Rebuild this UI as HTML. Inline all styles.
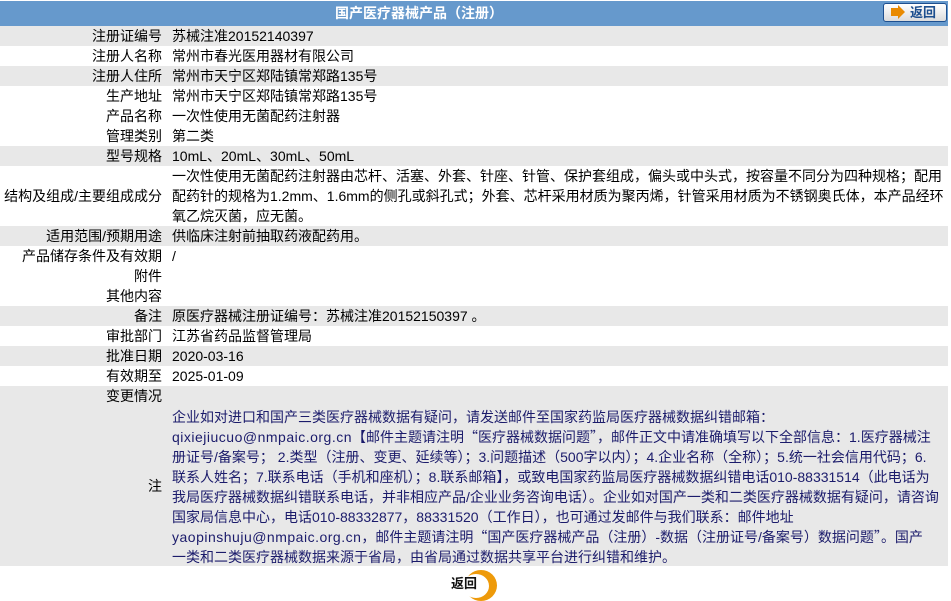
<!DOCTYPE html>
<html><head><meta charset="utf-8"><style>
*{margin:0;padding:0;box-sizing:border-box}
body{width:951px;height:601px;background:#fff;font-family:"Liberation Sans","Noto Sans CJK SC",sans-serif;font-size:14px;color:#000;position:relative;overflow:hidden}
.hd{position:absolute;left:0;top:1px;width:948px;height:25px;background:#6699cc;color:#fff;font-weight:bold;text-align:center;line-height:25px;font-size:14px}
.hd span{position:absolute;left:335px;top:0}
.btn{position:absolute;left:883px;top:3px;width:64px;height:19px;border:1px solid #1d4f8f;border-radius:3px;background:linear-gradient(#fff,#dcdcdc);}
.btn i{position:absolute;left:7px;top:4px;width:7px;height:8px;background:#e98a00}
.btn b{position:absolute;left:14px;top:1px;border-left:7px solid #e98a00;border-top:7px solid transparent;border-bottom:7px solid transparent}
.btn em{position:absolute;left:26px;top:-1px;font-style:normal;font-weight:bold;color:#1d4f8f;font-size:13px;line-height:19px}
.r{position:absolute;left:0;width:948px;line-height:20px;white-space:nowrap}
.g{background:#e8e8e8}
.l{position:absolute;right:786px;text-align:right}
.v{position:absolute;left:172px}
.n{color:#1b1b6b}
.q{font-family:"Noto Sans CJK SC",sans-serif}
.e{letter-spacing:0.5px}
</style></head><body>
<div class="hd"><span>国产医疗器械产品（注册）</span></div>
<div class="btn"><i></i><b></b><em>返回</em></div>

<div class="r g" style="top:26px;height:20px"><div class="l">注册证编号</div><div class="v">苏械注准20152140397</div></div>
<div class="r" style="top:46px;height:20px"><div class="l">注册人名称</div><div class="v">常州市春光医用器材有限公司</div></div>
<div class="r g" style="top:66px;height:20px"><div class="l">注册人住所</div><div class="v">常州市天宁区郑陆镇常郑路135号</div></div>
<div class="r" style="top:86px;height:20px"><div class="l">生产地址</div><div class="v">常州市天宁区郑陆镇常郑路135号</div></div>
<div class="r" style="top:106px;height:20px"><div class="l">产品名称</div><div class="v">一次性使用无菌配药注射器</div></div>
<div class="r" style="top:126px;height:20px"><div class="l">管理类别</div><div class="v">第二类</div></div>
<div class="r g" style="top:146px;height:20px"><div class="l">型号规格</div><div class="v">10mL、20mL、30mL、50mL</div></div>
<div class="r" style="top:166px;height:60px"><div class="l" style="top:20px">结构及组成/主要组成成分</div><div class="v">一次性使用无菌配药注射器由芯杆、活塞、外套、针座、针管、保护套组成，偏头或中头式，按容量不同分为四种规格；配用<br>配药针的规格为1.2mm、1.6mm的侧孔或斜孔式；外套、芯杆采用材质为聚丙烯，针管采用材质为不锈钢奥氏体，本产品经环<br>氧乙烷灭菌，应无菌。</div></div>
<div class="r g" style="top:226px;height:20px"><div class="l">适用范围/预期用途</div><div class="v">供临床注射前抽取药液配药用。</div></div>
<div class="r" style="top:246px;height:20px"><div class="l">产品储存条件及有效期</div><div class="v">/</div></div>
<div class="r" style="top:266px;height:20px"><div class="l">附件</div></div>
<div class="r" style="top:286px;height:20px"><div class="l">其他内容</div></div>
<div class="r g" style="top:306px;height:20px"><div class="l">备注</div><div class="v">原医疗器械注册证编号：苏械注准20152150397 。</div></div>
<div class="r" style="top:326px;height:20px"><div class="l">审批部门</div><div class="v">江苏省药品监督管理局</div></div>
<div class="r g" style="top:346px;height:20px"><div class="l">批准日期</div><div class="v">2020-03-16</div></div>
<div class="r" style="top:366px;height:20px"><div class="l">有效期至</div><div class="v">2025-01-09</div></div>
<div class="r g" style="top:386px;height:180px"><div class="l" style="top:0">变更情况</div><div class="l" style="top:90px">注</div>
<div class="v n" style="top:21px">企业如对进口和国产三类医疗器械数据有疑问，请发送邮件至国家药监局医疗器械数据纠错邮箱：<br><span class="e">qixiejiucuo@nmpaic.org.cn</span>【邮件主题请注明<span class="q">“</span>医疗器械数据问题<span class="q">”</span>，邮件正文中请准确填写以下全部信息：1.医疗器械注<br>册证号/备案号； 2.类型（注册、变更、延续等）；3.问题描述（500字以内）；4.企业名称（全称）；5.统一社会信用代码；6.<br>联系人姓名；7.联系电话（手机和座机）；8.联系邮箱】，或致电国家药监局医疗器械数据纠错电话010-88331514（此电话为<br>我局医疗器械数据纠错联系电话，并非相应产品/企业业务咨询电话）。企业如对国产一类和二类医疗器械数据有疑问，请咨询<br>国家局信息中心，电话010-88332877，88331520（工作日），也可通过发邮件与我们联系：邮件地址<br><span class="e">yaopinshuju@nmpaic.org.cn</span>，邮件主题请注明<span class="q">“</span>国产医疗器械产品（注册）-数据（注册证号/备案号）数据问题<span class="q">”</span>。国产<br>一类和二类医疗器械数据来源于省局，由省局通过数据共享平台进行纠错和维护。</div></div>

<div style="position:absolute;left:465px;top:570px;width:32px;height:31px;border-radius:50%;background:#ee9a0a"></div>
<div style="position:absolute;left:463px;top:574px;width:26px;height:24px;border-radius:50%;background:#fff"></div>
<div style="position:absolute;left:451px;top:575px;font-weight:bold;font-size:13px;line-height:18px;color:#111">返回</div>
</body></html>
